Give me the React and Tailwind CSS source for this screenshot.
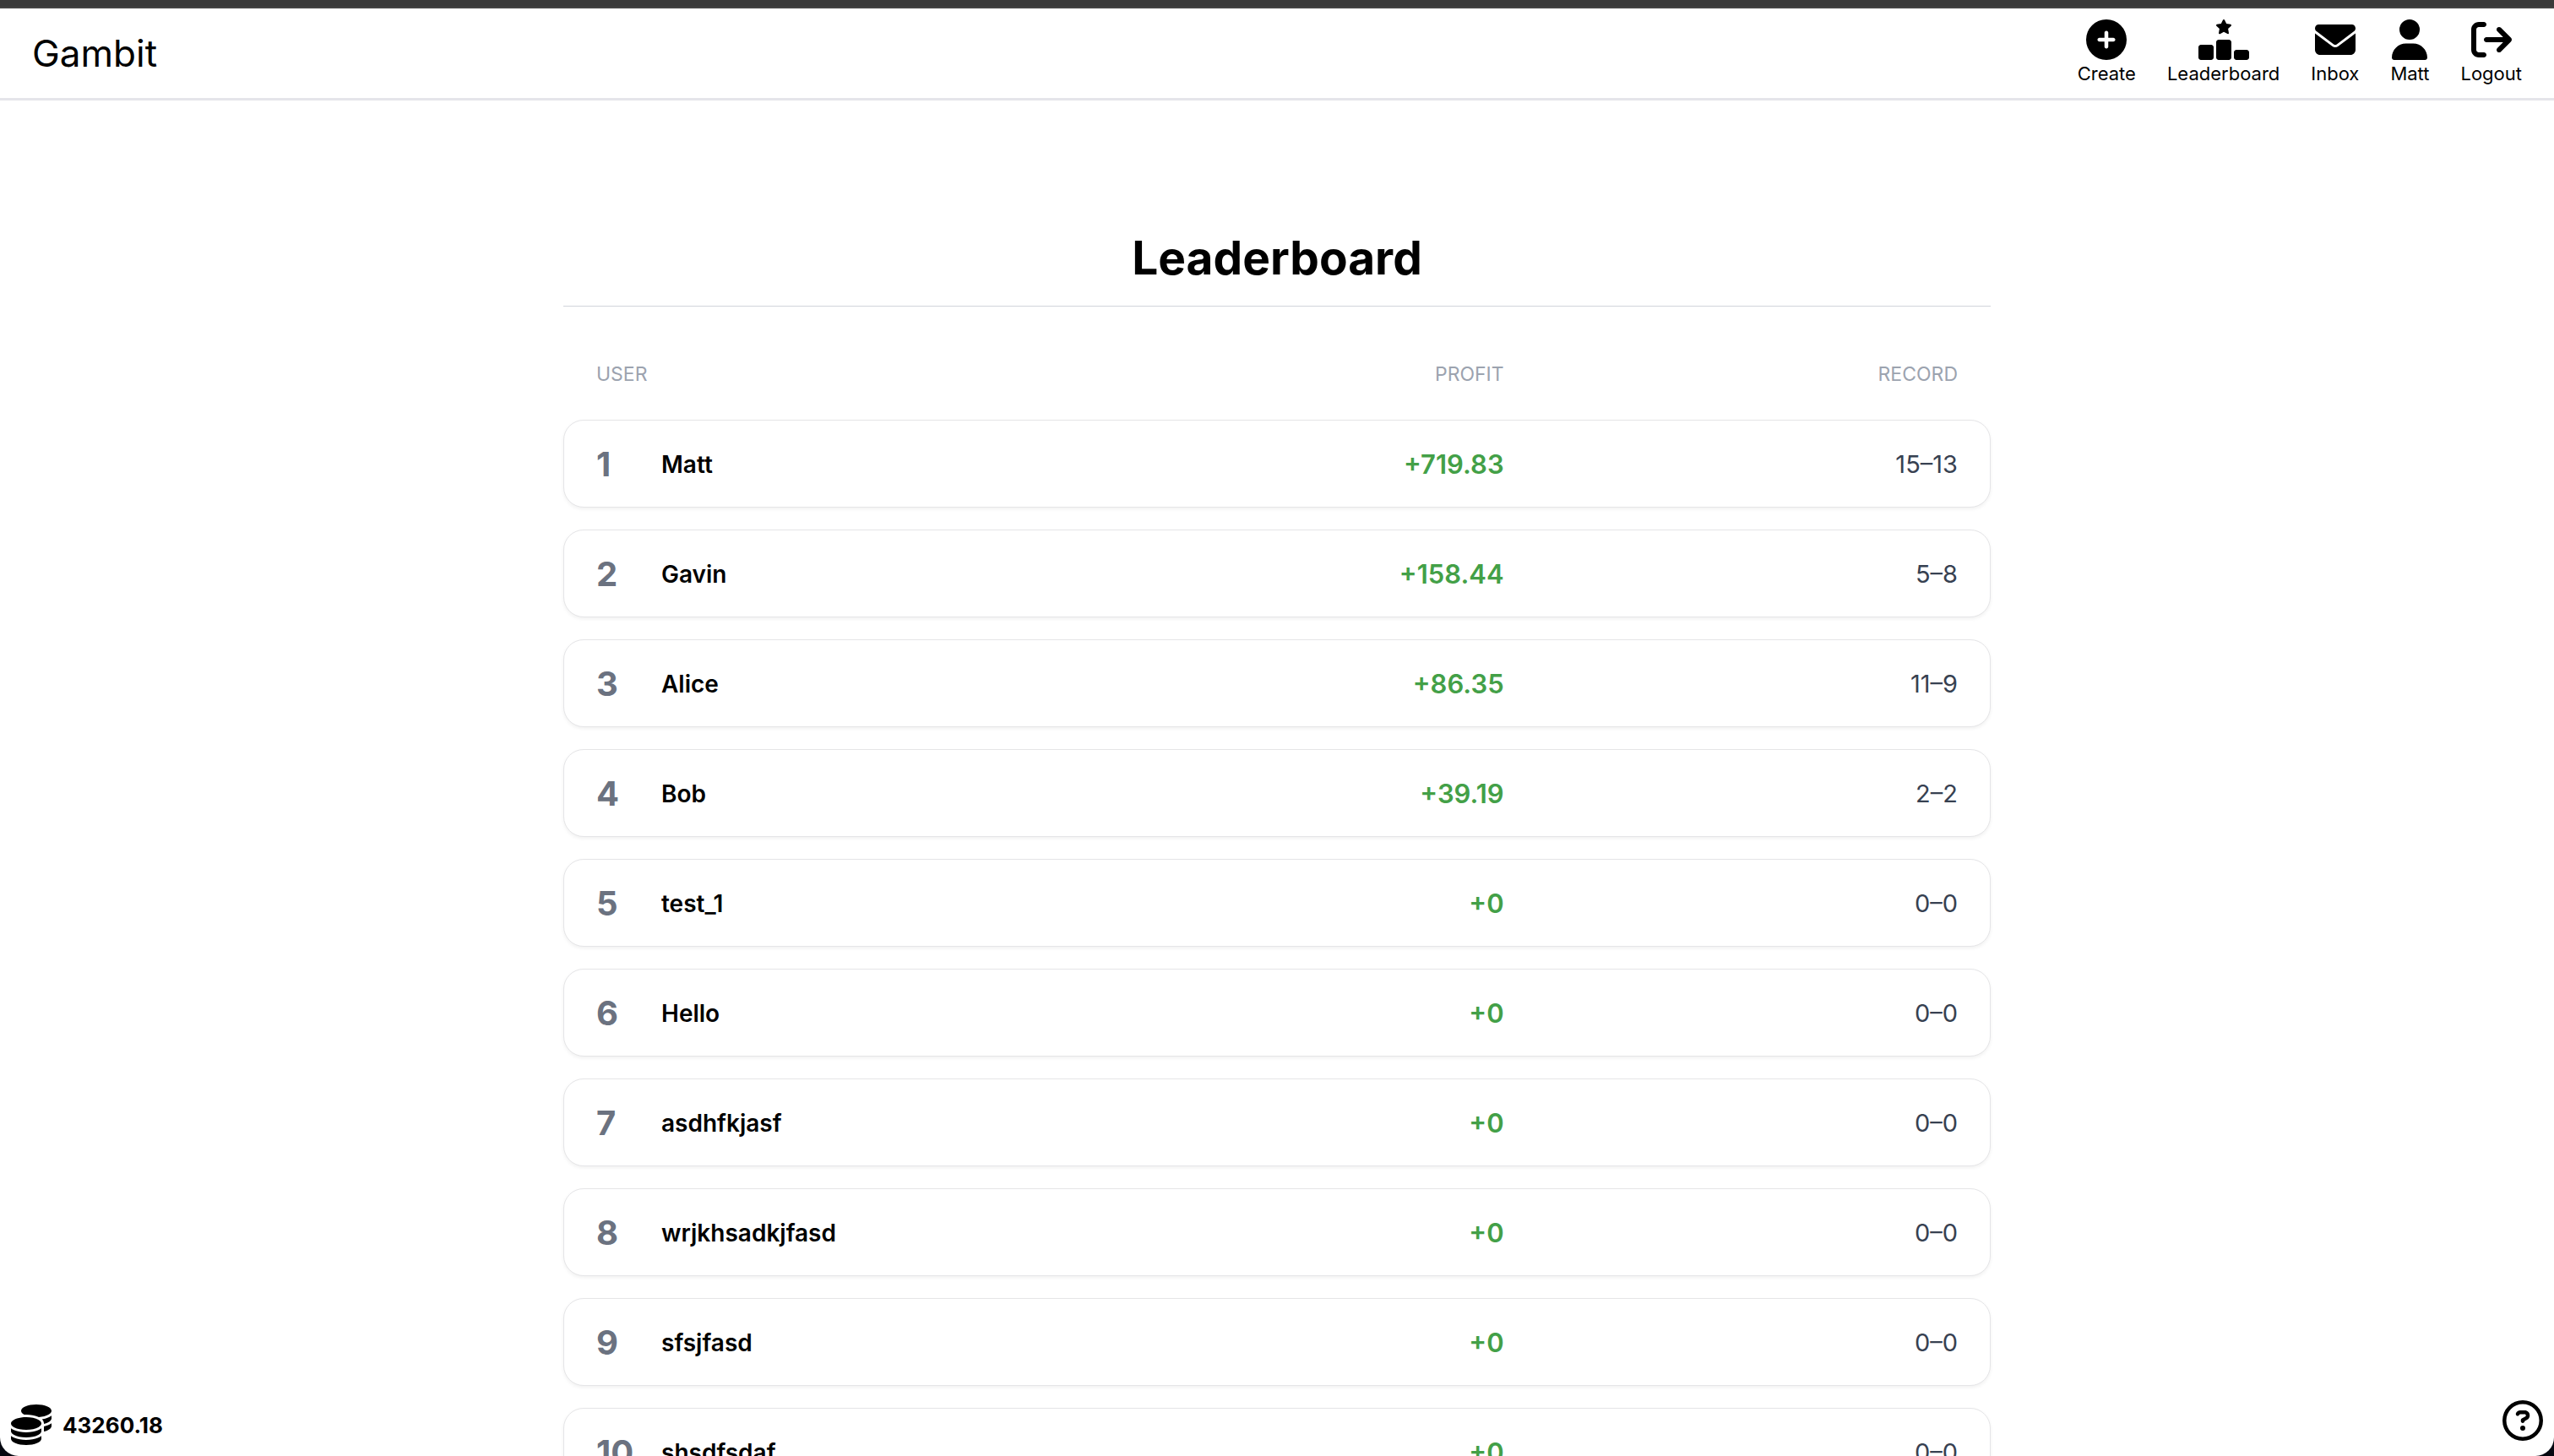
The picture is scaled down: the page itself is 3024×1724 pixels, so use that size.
import {
  FaCirclePlus,
  FaRankingStar,
  FaEnvelope,
  FaUser,
  FaArrowRightFromBracket,
  FaCoins,
  FaRegCircleQuestion,
} from 'react-icons/fa6';

const navItems = [
  { label: 'Create', icon: FaCirclePlus, iconClass: 'h-12 w-12' },
  { label: 'Leaderboard', icon: FaRankingStar, iconClass: 'h-12 w-[60px]' },
  { label: 'Inbox', icon: FaEnvelope, iconClass: 'h-12 w-12' },
  { label: 'Matt', icon: FaUser, iconClass: 'h-12 w-[42px]' },
  { label: 'Logout', icon: FaArrowRightFromBracket, iconClass: 'h-12 w-12' },
];

const players = [
  { name: 'Matt', profit: '+719.83', record: '15–13' },
  { name: 'Gavin', profit: '+158.44', record: '5–8' },
  { name: 'Alice', profit: '+86.35', record: '11–9' },
  { name: 'Bob', profit: '+39.19', record: '2–2' },
  { name: 'test_1', profit: '+0', record: '0–0' },
  { name: 'Hello', profit: '+0', record: '0–0' },
  { name: 'asdhfkjasf', profit: '+0', record: '0–0' },
  { name: 'wrjkhsadkjfasd', profit: '+0', record: '0–0' },
  { name: 'sfsjfasd', profit: '+0', record: '0–0' },
  { name: 'shsdfsdaf', profit: '+0', record: '0–0' },
];

function Header() {
  return (
    <header className="flex h-[109px] shrink-0 items-center justify-between border-b-[3px] border-[#e5e5ea] px-[38px]">
      <a href="#home" className="text-[44px] leading-[56px]">
        Gambit
      </a>
      <nav className="flex items-center gap-[37px]">
        {navItems.map(({ label, icon: Icon, iconClass }) => (
          <a key={label} href={`#${label.toLowerCase()}`} className="flex flex-col items-center">
            <Icon className={iconClass} aria-hidden="true" />
            <span className="text-[22px] leading-8">{label}</span>
          </a>
        ))}
      </nav>
    </header>
  );
}

function Leaderboard() {
  return (
    <section className="mx-auto w-full max-w-[1690px] pt-[153px]">
      <h1 className="border-b border-[#d1d5db] pb-6 text-center text-[55px] leading-[66px] font-bold">
        Leaderboard
      </h1>
      <table className="mt-16 block">
        <thead className="block">
          <tr className="grid grid-cols-3 px-[39px] text-[23px] leading-8 text-[#9ca3af] uppercase">
            <th scope="col" className="text-left font-normal">User</th>
            <th scope="col" className="text-right font-normal">Profit</th>
            <th scope="col" className="text-right font-normal">Record</th>
          </tr>
        </thead>
        <tbody className="mt-[38px] flex flex-col gap-[26px]">
          {players.map(({ name, profit, record }, index) => (
            <tr
              key={name}
              className="grid h-[104px] grid-cols-3 items-center rounded-3xl border border-[#e5e5e7] bg-white px-[38px] pt-0.5 shadow-[0_2px_4px_rgba(0,0,0,0.06)]"
            >
              <td className="flex items-center">
                <span className="w-[77px] shrink-0 text-[40px] leading-[48px] font-bold text-[#6b7280]">
                  {index + 1}
                </span>
                <span className="text-[28px] leading-10 font-semibold">{name}</span>
              </td>
              <td className="text-right text-[31px] leading-10 font-semibold text-[#43a047]">{profit}</td>
              <td className="text-right text-[29px] leading-10 text-[#374151]">{record}</td>
            </tr>
          ))}
        </tbody>
      </table>
    </section>
  );
}

export default function App() {
  return (
    <div className="flex h-screen flex-col bg-[#050810] font-[Inter,sans-serif] text-black">
      <div className="h-[10px] shrink-0 border-b-2 border-[#444444] bg-[#3a3a3a]" />
      <div className="relative flex min-h-0 flex-1 flex-col overflow-hidden rounded-b-[22px] bg-white">
        <Header />
        <main className="min-h-0 flex-1 overflow-hidden">
          <Leaderboard />
        </main>
        <div className="absolute bottom-[13px] left-[13px] flex items-center gap-[13px]">
          <FaCoins className="size-12" aria-hidden="true" />
          <span className="pt-0.5 text-[26px] leading-8 font-bold">43260.18</span>
        </div>
        <button type="button" aria-label="Help" className="absolute right-[13px] bottom-[18px]">
          <FaRegCircleQuestion className="size-12" aria-hidden="true" />
        </button>
      </div>
    </div>
  );
}
